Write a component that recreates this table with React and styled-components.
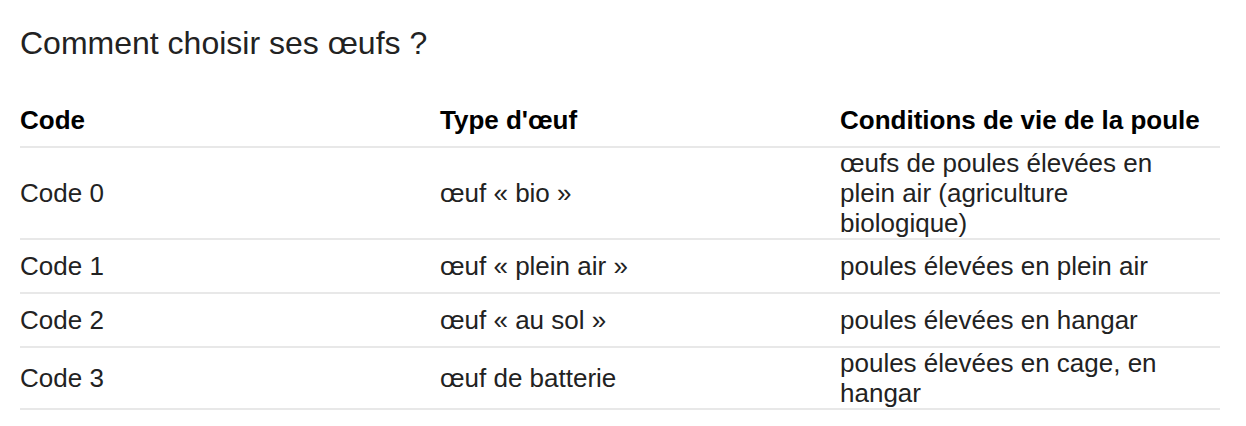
import React from "react";
import styled, { createGlobalStyle } from "styled-components";

const GlobalStyle = createGlobalStyle`
  html, body {
    margin: 0;
    padding: 0;
    background: #fff;
  }
  body {
    font-family: "Liberation Sans", Arial, sans-serif;
    color: #222;
  }
`;

const Page = styled.div`
  padding: 25px 26px 0 20px;
`;

const Title = styled.h2`
  margin: 0 0 33px 0;
  font-size: 32px;
  line-height: 36px;
  font-weight: normal;
  color: #222;
`;

const Table = styled.table`
  width: 1200px;
  border-collapse: collapse;
  font-size: 26px;
  line-height: 30px;
`;

const HeadCell = styled.th`
  text-align: left;
  font-weight: bold;
  color: #000;
  height: 52px;
  padding: 0;
  vertical-align: middle;
  width: ${({ $w }) => $w}px;
  border-bottom: 2px solid #e8e8e8;
`;

const Cell = styled.td`
  height: 52px;
  padding: 0;
  vertical-align: middle;
  border-bottom: 2px solid #e8e8e8;
  ${({ $narrow }) => ($narrow ? "padding-right: 40px;" : "")}
`;

const rows = [
  ["Code 0", "œuf « bio »", "œufs de poules élevées en plein air (agriculture biologique)"],
  ["Code 1", "œuf « plein air »", "poules élevées en plein air"],
  ["Code 2", "œuf « au sol »", "poules élevées en hangar"],
  ["Code 3", "œuf de batterie", "poules élevées en cage, en hangar"],
];

export default function App() {
  return (
    <>
      <GlobalStyle />
      <Page>
        <Title>Comment choisir ses œufs ?</Title>
        <Table>
          <thead>
            <tr>
              <HeadCell $w={420}>Code</HeadCell>
              <HeadCell $w={400}>Type d'œuf</HeadCell>
              <HeadCell $w={380}>Conditions de vie de la poule</HeadCell>
            </tr>
          </thead>
          <tbody>
            {rows.map((r) => (
              <tr key={r[0]}>
                <Cell>{r[0]}</Cell>
                <Cell>{r[1]}</Cell>
                <Cell $narrow>{r[2]}</Cell>
              </tr>
            ))}
          </tbody>
        </Table>
      </Page>
    </>
  );
}
